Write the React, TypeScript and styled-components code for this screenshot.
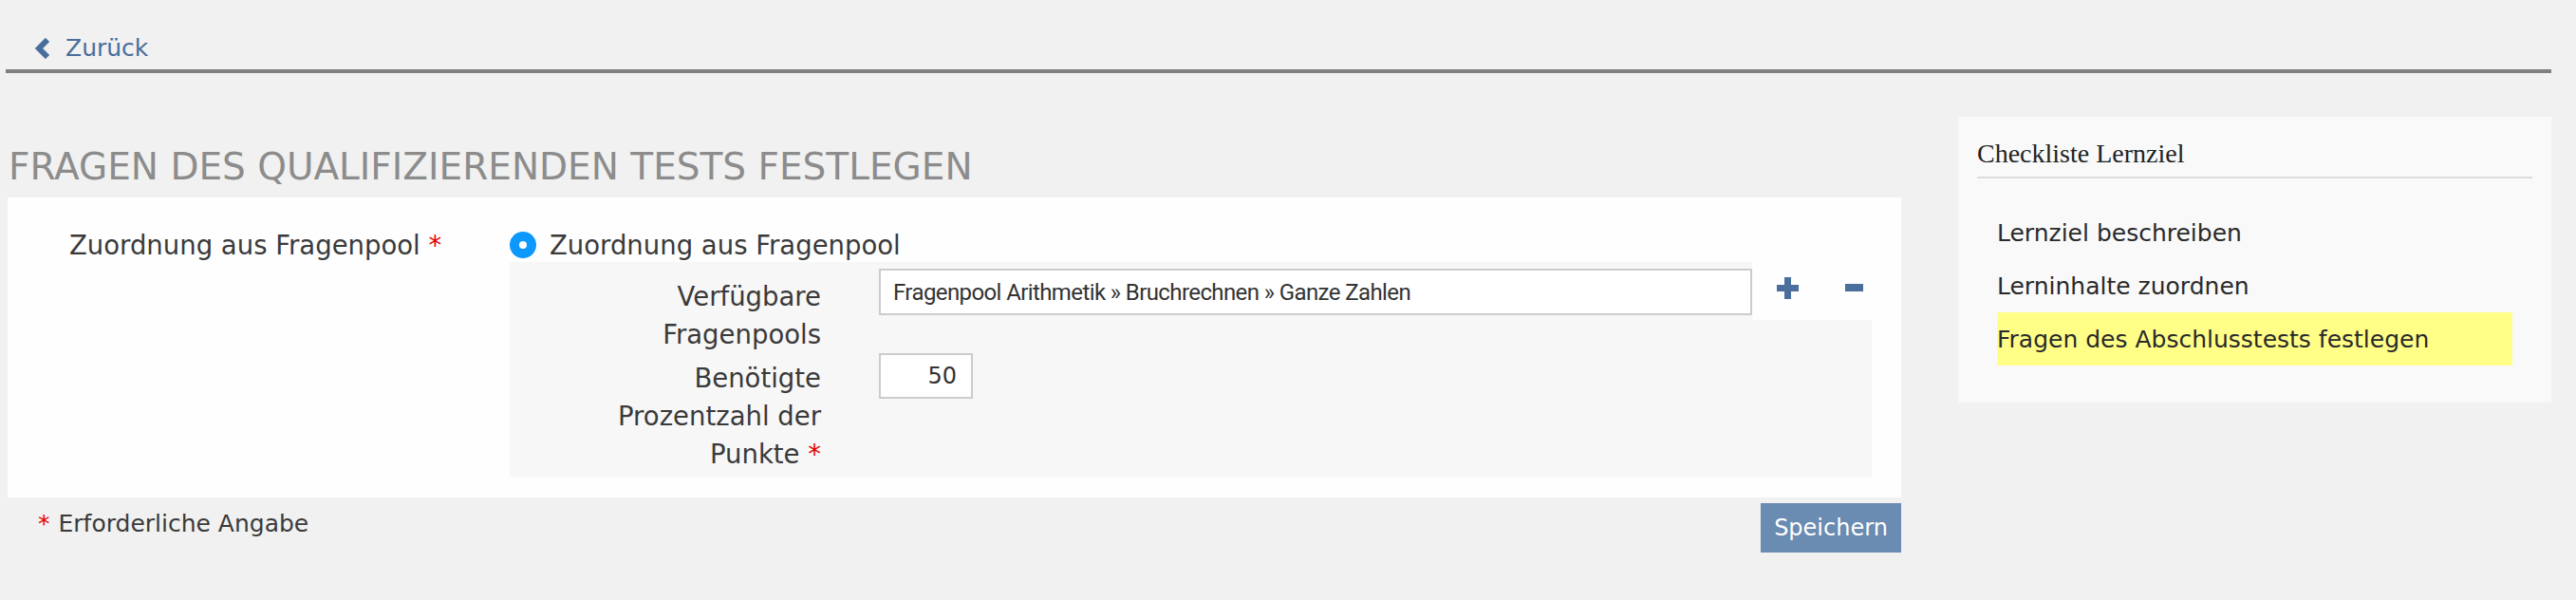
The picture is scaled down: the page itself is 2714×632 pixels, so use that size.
import React from "react";
import styled, { createGlobalStyle } from "styled-components";

const GlobalStyle = createGlobalStyle`
  html, body {
    margin: 0;
    padding: 0;
    background: #f1f1f1;
  }
  body {
    font-family: "DejaVu Sans", Verdana, sans-serif;
    color: #3a3a3a;
  }
  * { box-sizing: border-box; }
`;

const Page = styled.div`
  width: 2714px;
  min-height: 632px;
  background: #f1f1f1;
`;

const TopBar = styled.div`
  display: flex;
  align-items: center;
  height: 77px;
  margin: 0 26px 0 6px;
  padding: 36px 0 7px 30px;
  border-bottom: 4px solid #808080;
`;

const BackLink = styled.a`
  display: flex;
  align-items: center;
  gap: 15px;
  height: 30px;
  line-height: 30px;
  color: #4a6e9b;
  font-size: 25px;
  text-decoration: none;
  cursor: pointer;
`;

const Main = styled.div`
  display: flex;
  align-items: flex-start;
  gap: 60px;
  padding: 0 26px 0 8px;
`;

const LeftColumn = styled.div`
  width: 1995px;
  flex: none;
  padding-top: 75px;
`;

const Heading = styled.h1`
  margin: 0 0 8px 1px;
  font-size: 39px;
  line-height: 48px;
  font-weight: normal;
  color: #8c8c8c;
  text-transform: uppercase;
  white-space: nowrap;
`;

const Card = styled.div`
  background: #fefefe;
  padding: 32px 31px 21px 0;
  display: flex;
  align-items: flex-start;
`;

const MainLabel = styled.div`
  width: 529px;
  flex: none;
  padding-left: 65px;
  font-size: 27.5px;
  line-height: 36px;
`;

const Required = styled.span`
  color: #e60000;
`;

const FieldArea = styled.div`
  flex: 1;
  display: flex;
  flex-direction: column;
`;

const RadioRow = styled.label`
  display: flex;
  align-items: center;
  gap: 14px;
  font-size: 27.5px;
  line-height: 36px;
  height: 36px;
`;

const RadioDot = styled.span`
  width: 28px;
  height: 28px;
  border-radius: 50%;
  background: #0d98fd;
  display: inline-flex;
  align-items: center;
  justify-content: center;
  flex: none;
  &::after {
    content: "";
    width: 8px;
    height: 8px;
    border-radius: 50%;
    background: #ffffff;
  }
`;

const SubPanel = styled.div`
  background: #f7f7f7;
  display: grid;
  grid-template-columns: 328px 1fr;
  column-gap: 61px;
`;

const SubLabel = styled.div<{ $top: number; $bottom?: number }>`
  text-align: right;
  font-size: 27.5px;
  line-height: 40px;
  padding-top: ${(p) => p.$top}px;
  padding-bottom: ${(p) => p.$bottom ?? 0}px;
`;

const PoolRow = styled.div`
  display: flex;
  align-items: flex-start;
`;

const PoolInputCell = styled.div`
  width: 920px;
  flex: none;
  padding-top: 7px;
`;

const TextInput = styled.div`
  width: 920px;
  height: 49px;
  background: #ffffff;
  border: 2px solid #cccccc;
  padding-left: 13px;
  display: flex;
  align-items: center;
  font-family: "Roboto", "Liberation Sans", sans-serif;
  font-size: 24px;
  letter-spacing: -0.6px;
  color: #333333;
  white-space: nowrap;
  overflow: hidden;
`;

const ButtonCell = styled.div`
  flex: 1;
  height: 61px;
  background: #fefefe;
  display: flex;
  align-items: flex-start;
  padding: 16px 0 0 26px;
  gap: 47px;
`;

const IconButton = styled.button`
  border: none;
  background: transparent;
  padding: 0;
  width: 23px;
  height: 23px;
  display: flex;
  align-items: center;
  justify-content: center;
  cursor: pointer;
`;

const NumberCell = styled.div`
  padding-top: 0;
`;

const NumberInput = styled.div`
  width: 99px;
  height: 48px;
  background: #ffffff;
  border: 2px solid #cccccc;
  padding-right: 15px;
  display: flex;
  align-items: center;
  justify-content: flex-end;
  font-size: 24px;
  color: #333333;
`;

const Footer = styled.div`
  display: flex;
  justify-content: space-between;
  align-items: flex-start;
`;

const Legend = styled.div`
  margin-top: 13px;
  padding-left: 32px;
  font-size: 25px;
  line-height: 30px;
  display: flex;
  gap: 9px;
`;

const SaveButton = styled.button`
  margin-top: 6px;
  width: 148px;
  height: 52px;
  border: none;
  background: #6a8bb2;
  color: #ffffff;
  font-family: "DejaVu Sans", Verdana, sans-serif;
  font-size: 24px;
  padding: 0;
  cursor: pointer;
`;

const Sidebar = styled.aside`
  width: 625px;
  flex: none;
  margin-top: 46px;
  background: #f9f9f9;
  padding: 22px 20px 39px 20px;
`;

const SidebarTitle = styled.h2`
  margin: 0;
  font-family: "Liberation Serif", "Times New Roman", serif;
  font-weight: normal;
  font-size: 28px;
  line-height: 34px;
  color: #222222;
  padding-bottom: 7px;
  border-bottom: 2px solid #dddddd;
`;

const CheckList = styled.ul`
  list-style: none;
  margin: 29px 0 0 0;
  padding: 0 21px;
`;

const CheckItem = styled.li<{ $active?: boolean }>`
  height: 56px;
  display: flex;
  align-items: center;
  font-size: 25px;
  color: #2a2a2a;
  background: ${(p) => (p.$active ? "#ffff88" : "transparent")};
`;

const Chevron = () => (
  <svg width="18" height="22" viewBox="0 0 18 22" aria-hidden="true">
    <polyline
      points="14,2 5,11 14,20"
      fill="none"
      stroke="#4a6e9b"
      strokeWidth="6"
      strokeLinejoin="miter"
      strokeLinecap="butt"
    />
  </svg>
);

const PlusIcon = () => (
  <svg width="23" height="23" viewBox="0 0 23 23" aria-hidden="true">
    <rect x="8" y="0" width="7" height="23" fill="#4a6f9c" />
    <rect x="0" y="8" width="23" height="7" fill="#4a6f9c" />
  </svg>
);

const MinusIcon = () => (
  <svg width="19" height="23" viewBox="0 0 19 23" aria-hidden="true">
    <rect x="0" y="7" width="19" height="8" fill="#4a6f9c" />
  </svg>
);

export default function App() {
  return (
    <Page>
      <GlobalStyle />
      <TopBar>
        <BackLink>
          <Chevron />
          Zurück
        </BackLink>
      </TopBar>
      <Main>
        <LeftColumn>
          <Heading>Fragen des qualifizierenden Tests festlegen</Heading>
          <Card>
            <MainLabel>
              Zuordnung aus Fragenpool <Required>*</Required>
            </MainLabel>
            <FieldArea>
              <RadioRow>
                <RadioDot />
                Zuordnung aus Fragenpool
              </RadioRow>
              <SubPanel>
                <SubLabel $top={16}>
                  Verfügbare
                  <br />
                  Fragenpools
                </SubLabel>
                <PoolRow>
                  <PoolInputCell>
                    <TextInput>
                      Fragenpool Arithmetik » Bruchrechnen » Ganze Zahlen
                    </TextInput>
                  </PoolInputCell>
                  <ButtonCell>
                    <IconButton aria-label="Hinzufügen">
                      <PlusIcon />
                    </IconButton>
                    <IconButton aria-label="Entfernen">
                      <MinusIcon />
                    </IconButton>
                  </ButtonCell>
                </PoolRow>
                <SubLabel $top={6} $bottom={5}>
                  Benötigte
                  <br />
                  Prozentzahl der
                  <br />
                  Punkte <Required>*</Required>
                </SubLabel>
                <NumberCell>
                  <NumberInput>50</NumberInput>
                </NumberCell>
              </SubPanel>
            </FieldArea>
          </Card>
          <Footer>
            <Legend>
              <Required>*</Required>
              <span>Erforderliche Angabe</span>
            </Legend>
            <SaveButton>Speichern</SaveButton>
          </Footer>
        </LeftColumn>
        <Sidebar>
          <SidebarTitle>Checkliste Lernziel</SidebarTitle>
          <CheckList>
            <CheckItem>Lernziel beschreiben</CheckItem>
            <CheckItem>Lerninhalte zuordnen</CheckItem>
            <CheckItem $active>Fragen des Abschlusstests festlegen</CheckItem>
          </CheckList>
        </Sidebar>
      </Main>
    </Page>
  );
}
